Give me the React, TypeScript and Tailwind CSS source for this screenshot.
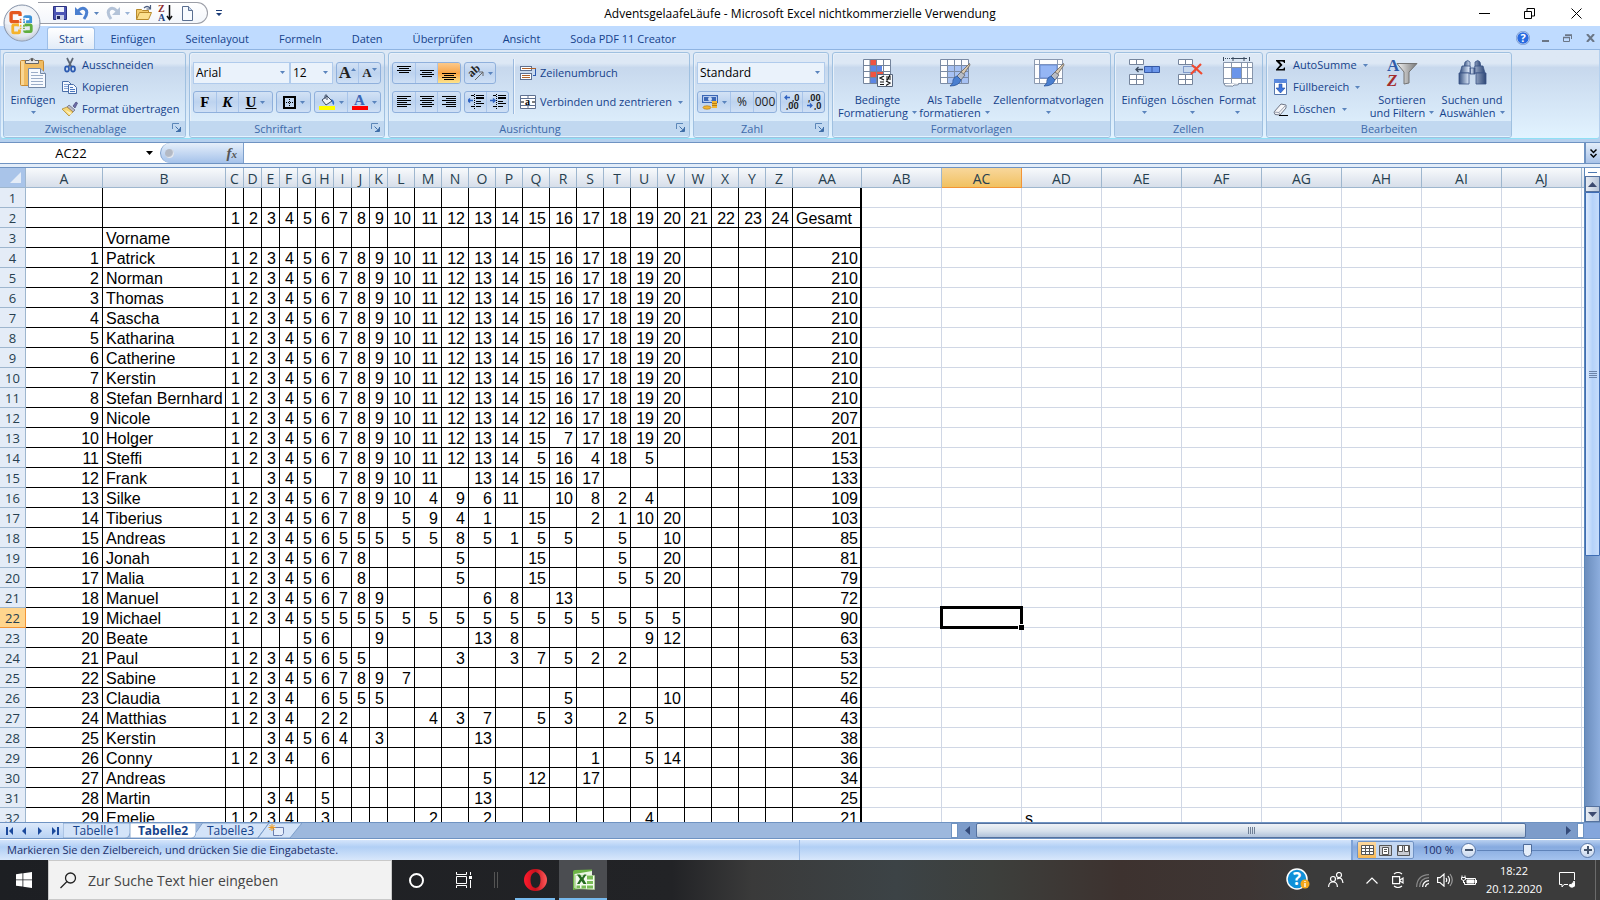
import { Fragment, type ReactNode } from "react";

type SheetRow = { name?: string; days?: string; total?: string };

const FULL = "1 2 3 4 5 6 7 8 9 10 11 12 13 14 15 16 17 18 19 20";

// one entry per spreadsheet row, "." is an empty cell
const ROWS: SheetRow[] = [
  {},
  { days: FULL + " 21 22 23 24", total: "Gesamt" },
  { name: "Vorname" },
  { name: "Patrick", days: FULL, total: "210" },
  { name: "Norman", days: FULL, total: "210" },
  { name: "Thomas", days: FULL, total: "210" },
  { name: "Sascha", days: FULL, total: "210" },
  { name: "Katharina", days: FULL, total: "210" },
  { name: "Catherine", days: FULL, total: "210" },
  { name: "Kerstin", days: FULL, total: "210" },
  { name: "Stefan Bernhard", days: FULL, total: "210" },
  { name: "Nicole", days: "1 2 3 4 5 6 7 8 9 10 11 12 13 14 12 16 17 18 19 20", total: "207" },
  { name: "Holger", days: "1 2 3 4 5 6 7 8 9 10 11 12 13 14 15 7 17 18 19 20", total: "201" },
  { name: "Steffi", days: "1 2 3 4 5 6 7 8 9 10 11 12 13 14 5 16 4 18 5", total: "153" },
  { name: "Frank", days: "1 . 3 4 5 . 7 8 9 10 11 . 13 14 15 16 17", total: "133" },
  { name: "Silke", days: "1 2 3 4 5 6 7 8 9 10 4 9 6 11 . 10 8 2 4", total: "109" },
  { name: "Tiberius", days: "1 2 3 4 5 6 7 8 . 5 9 4 1 . 15 . 2 1 10 20", total: "103" },
  { name: "Andreas", days: "1 2 3 4 5 6 5 5 5 5 5 8 5 1 5 5 . 5 . 10", total: "85" },
  { name: "Jonah", days: "1 2 3 4 5 6 7 8 . . . 5 . . 15 . . 5 . 20", total: "81" },
  { name: "Malia", days: "1 2 3 4 5 6 . 8 . . . 5 . . 15 . . 5 5 20", total: "79" },
  { name: "Manuel", days: "1 2 3 4 5 6 7 8 9 . . . 6 8 . 13", total: "72" },
  { name: "Michael", days: "1 2 3 4 5 5 5 5 5 5 5 5 5 5 5 5 5 5 5 5", total: "90" },
  { name: "Beate", days: "1 . . . 5 6 . . 9 . . . 13 8 . . . . 9 12", total: "63" },
  { name: "Paul", days: "1 2 3 4 5 6 5 5 . . . 3 . 3 7 5 2 2", total: "53" },
  { name: "Sabine", days: "1 2 3 4 5 6 7 8 9 7", total: "52" },
  { name: "Claudia", days: "1 2 3 4 . 6 5 5 5 . . . . . . 5 . . . 10", total: "46" },
  { name: "Matthias", days: "1 2 3 4 . 2 2 . . . 4 3 7 . 5 3 . 2 5", total: "43" },
  { name: "Kerstin", days: ". . 3 4 5 6 4 . 3 . . . 13", total: "38" },
  { name: "Conny", days: "1 2 3 4 . 6 . . . . . . . . . . 1 . 5 14", total: "36" },
  { name: "Andreas", days: ". . . . . . . . . . . . 5 . 12 . 17", total: "34" },
  { name: "Martin", days: ". . 3 4 . 5 . . . . . . 13", total: "25" },
  { name: "Emelie", days: "1 2 3 4 . 3 . . . . 2 . 2 . . . . . 4", total: "21" },
];

const DAY_COLS = "CDEFGHIJKLMNOPQRSTUVWXYZ".split("");
const FREE_COLS = ["AB", "AC", "AD", "AE", "AF", "AG", "AH", "AI", "AJ"];
const HEADERS = ["A", "B", ...DAY_COLS, "AA", ...FREE_COLS];

const UI = "font-['Open_Sans','Noto_Sans',sans-serif]";

/* ---------- small building blocks ---------- */

function Caret({ className = "" }: { className?: string }) {
  return (
    <svg className={`h-[3px] w-[5px] shrink-0 ${className}`} viewBox="0 0 5 3" fill="#5a84bd">
      <path d="M0 0h5L2.500 3z" />
    </svg>
  );
}

function Group({ label, className, launcher, children }: { label: string; className: string; launcher?: boolean; children: ReactNode }) {
  return (
    <section className={`flex shrink-0 flex-col overflow-hidden rounded-[3px] border border-[#9fc0e0] shadow-[inset_1px_1px_0_#e8f0f9] ${className}`}>
      <div className="flex h-[68px]">{children}</div>
      <div className={`relative flex h-[15px] items-center justify-center bg-[#c1d8f0] text-[#3e6aaa] ${launcher ? "pr-[18px]" : ""}`}>
        {label}
        {launcher && (
          <button aria-label={`${label} Optionen`} className="absolute right-1 top-[2px]">
            <svg className="h-[9px] w-[9px]" viewBox="0 0 9 9" fill="none" stroke="#5b86b8">
              <path d="M.5 6V.5H7" />
              <path d="M3.500 3.500l3 3M8.500 4v4.500H4" stroke="#3f6ea8" />
              <path d="M5 8h3V5z" fill="#3f6ea8" stroke="none" />
            </svg>
          </button>
        )}
      </div>
    </section>
  );
}

function BigButton({ icon, lines, className }: { icon: ReactNode; lines: string[]; className: string }) {
  return (
    <button className={`flex flex-col items-center whitespace-nowrap pt-1 leading-[13px] ${className}`}>
      <span className="mb-1 h-8 w-8">{icon}</span>
      <span>{lines[0]}</span>
      <span className="flex h-[13px] items-center gap-1">
        {lines[1]}
        <Caret />
      </span>
    </button>
  );
}

function SmallButton({ icon, children, caret }: { icon: ReactNode; children: ReactNode; caret?: boolean }) {
  return (
    <button className="flex h-[22px] shrink-0 items-center gap-1 whitespace-nowrap">
      <span className="h-4 w-4 shrink-0">{icon}</span>
      {children}
      {caret && <Caret className="ml-[2px]" />}
    </button>
  );
}

function Cluster({ children, className = "" }: { children: ReactNode; className?: string }) {
  return (
    <div className={`flex h-[22px] divide-x divide-[#a9c5ea] overflow-hidden rounded-[3px] border border-[#8fb0dc] bg-linear-to-b from-[#d3e2f5] via-[#bdd3ef] to-[#cfe0f5] ${className}`}>
      {children}
    </div>
  );
}

function Tool({ label, className = "", children, caret }: { label: string; className?: string; children: ReactNode; caret?: boolean }) {
  return (
    <button aria-label={label} className={`flex flex-1 items-center justify-center gap-1 ${className}`}>
      {children}
      {caret && <Caret />}
    </button>
  );
}

function Picker({ label, value, className }: { label: string; value: string; className: string }) {
  return (
    <div className={`relative h-[22px] border border-[#b0cbec] bg-[#eaf2fb] text-[12px] ${className}`}>
      <select aria-label={label} className="h-full w-full appearance-none pl-[2px] text-black outline-none">
        <option>{value}</option>
      </select>
      <Caret className="pointer-events-none absolute right-1 top-2" />
    </div>
  );
}

/* ---------- ribbon icons ---------- */

function Lines({ d }: { d: string }) {
  return (
    <svg className="h-4 w-4" viewBox="0 0 16 16" stroke="#000" fill="none" shapeRendering="crispEdges">
      <path d={d} />
    </svg>
  );
}

function PasteIcon() {
  return (
    <svg viewBox="0 0 32 32">
      <rect x="3.500" y="3.500" width="23" height="25" rx="1" fill="#f0bc62" stroke="#c98b32" />
      <path d="M4 4h3v24H4z" fill="#f9d795" />
      <path d="M8.500 6.500v-3h3.500Q15-1 18 3.500h3.500v3z" fill="#e8e8e8" stroke="#666" />
      <circle cx="15" cy="3" r="1.200" fill="#555" />
      <path d="M11.500 11.500h12l5 5v14h-17z" fill="#f7fafe" stroke="#7388a6" />
      <path d="M23.500 11.500v5h5" fill="#cfdbec" stroke="#7388a6" />
      <path d="M14 15.500h7M14 18.500h12M14 21.500h12M14 24.500h12M14 27.500h12" stroke="#9badc8" />
    </svg>
  );
}

function ScissorsIcon() {
  return (
    <svg viewBox="0 0 16 16" fill="none">
      <path d="M5 1l4.500 9M11 1L6.500 10" stroke="#5c6675" strokeWidth="1.700" />
      <ellipse cx="5" cy="12" rx="2" ry="2.600" stroke="#2c5ab0" strokeWidth="1.700" />
      <ellipse cx="11" cy="12" rx="2" ry="2.600" stroke="#2c5ab0" strokeWidth="1.700" />
    </svg>
  );
}

function CopyIcon() {
  return (
    <svg viewBox="0 0 16 16" fill="#f4f8fe" stroke="#4a6ea8">
      <path d="M.5 2.500h6l3 3v7h-9z" />
      <path d="M2 5.500h4M2 7.500h4M2 9.500h4" stroke="#88a6d6" />
      <path d="M6.500 5.500h5l3 3v6h-8z" />
      <path d="M8 8.500h3M8 10.500h5M8 12.500h5" stroke="#4a78c0" />
    </svg>
  );
}

function FormatPainterIcon() {
  return (
    <svg viewBox="0 0 16 16">
      <path d="M11 5l3-4 1.500 1-2.500 5z" fill="#6d6ea8" stroke="#45457a" strokeWidth=".7" />
      <path d="M7 4l6 5-2 2-6-5z" fill="#b9b9c6" stroke="#66667a" strokeWidth=".7" />
      <path d="M5 6L0 8l7 7 4-4z" fill="#f6d775" stroke="#a7812c" strokeWidth=".7" />
      <path d="M3 9l5 5 2-2z" fill="#fbf0c0" />
    </svg>
  );
}

function ConditionalIcon() {
  return (
    <svg viewBox="0 0 32 32">
      <path d="M1.500 2.500h27v24h-27z" fill="#fff" />
      <path d="M8 2h6v6H8zM8 14h13v6H8z" fill="#ee5340" />
      <path d="M8 8h12v6H8zM8 20h6v6H8z" fill="#5b86e5" />
      <path d="M1.500 2.500h27v24h-27zM1.500 8.500h27M1.500 14.500h27M1.500 20.500h27M8 2v24M14.500 2v24M21.500 2v24" fill="none" stroke="#74849c" />
      <path d="M15.500 17.500h15v12h-15z" fill="#f8fafc" stroke="#56657c" />
      <path d="M22 19l-4 2 4 2M18 25h4M18 27.500h4M24 20h5M24 22h5M28 18l-3 5.500M24 24l4 2-4 2.500" fill="none" stroke="#111" strokeWidth="1.200" />
    </svg>
  );
}

function Brush() {
  return (
    <g>
      <path d="M31 8l-9 13-3-3L29 8q2-3 2 0z" fill="#d9c9b0" stroke="#6b6258" strokeWidth=".8" />
      <path d="M22 15l4 3-4 5-4-4z" fill="#b8bcc4" stroke="#5d626b" strokeWidth=".8" />
      <path d="M18 19l4 4q-2 6-11 6 4-3 3-6 1-3 4-4z" fill="#4a7fd0" stroke="#2a549c" strokeWidth=".8" />
    </g>
  );
}

function TableStyleIcon() {
  return (
    <svg viewBox="0 0 32 32">
      <path d="M1.500 2.500h28v24h-28z" fill="#fdfdfe" />
      <path d="M8 9h21v17H8z" fill="#a7c1f3" />
      <path d="M1.500 2.500h28v24h-28zM1.500 8.500h28M1.500 14.500h28M1.500 20.500h28M8.500 2v24M15.500 2v24M22.500 2v24" fill="none" stroke="#7b8ba5" />
      <Brush />
    </svg>
  );
}

function CellStyleIcon() {
  return (
    <svg viewBox="0 0 32 32">
      <path d="M1.500 2.500h28v24h-28z" fill="#fdfdfe" />
      <path d="M1.500 2.500h28v24h-28zM1.500 7.500h28M1.500 21.500h28M6.500 2v24M24.500 2v24" fill="none" stroke="#8b99b0" />
      <path d="M7 8h17v13H7z" fill="#95b6f5" stroke="#6a8bd0" />
      <Brush />
    </svg>
  );
}

function SplitGrid() {
  return <path d="M1.500 2.500h14v5h-14zM8.500 2.500v5M1.500 17.500h14v10h-14zM8.500 17.500v10M1.500 22.500h14" fill="#fff" stroke="#76859c" />;
}

function InsertCellsIcon() {
  return (
    <svg viewBox="0 0 32 32">
      <SplitGrid />
      <path d="M16.500 9.500h15v6h-15zM24 9.500v6" fill="#6a95ea" stroke="#3559a5" />
      <path d="M15 12.500H8M10.500 10L8 12.500l2.500 2.500" fill="none" stroke="#3b4a5e" strokeWidth="1.300" />
    </svg>
  );
}

function DeleteCellsIcon() {
  return (
    <svg viewBox="0 0 32 32">
      <SplitGrid />
      <path d="M6.500 9.500h12v6h-12z" fill="none" stroke="#3559a5" strokeDasharray="1 1" />
      <path d="M15 8l10 9M24 7l-10 10" stroke="#ef4a30" strokeWidth="2.200" />
    </svg>
  );
}

function FormatCellsIcon() {
  return (
    <svg viewBox="0 0 32 32">
      <path d="M1.500 0v4M27.500 0v4M10 1.500h15M22 0v4M11 0v4" stroke="#3b4a5e" fill="none" />
      <path d="M3 1.500h8" stroke="#3b4a5e" strokeDasharray="1 1" />
      <path d="M1.500 5.500h29v21h-29z" fill="#fff" />
      <path d="M10 11h9v10h-9z" fill="#6a95ea" />
      <path d="M1.500 5.500h29v21h-29zM1.500 10.500h29M1.500 21.500h29M9.500 5v22M19.500 5v22M25.500 5v22" fill="none" stroke="#8795ab" />
      <path d="M2 27q1 3 4 2h3q2 1 3-1h3q2 0 2-2" fill="#fff" stroke="#76859c" />
    </svg>
  );
}

function SortFilterIcon() {
  return (
    <svg viewBox="0 0 32 32">
      <defs>
        <linearGradient id="funnel">
          <stop offset="0" stopColor="#f2f2f2" />
          <stop offset="1" stopColor="#777" />
        </linearGradient>
      </defs>
      <path d="M11 6.500h20L23 15v11l-5 1V15z" fill="url(#funnel)" stroke="#747474" />
      <text x="1" y="14" fontSize="17" fontWeight="700" fontFamily="Liberation Serif" fill="#2f5ba8">A</text>
      <text x="1" y="29" fontSize="17" fontWeight="700" fontStyle="italic" fontFamily="Liberation Serif" fill="#a32d2d">Z</text>
    </svg>
  );
}

function BinocularsIcon() {
  return (
    <svg viewBox="0 0 32 32">
      <defs>
        <linearGradient id="bino">
          <stop offset="0" stopColor="#35507f" />
          <stop offset=".35" stopColor="#d5e2f5" />
          <stop offset="1" stopColor="#2d4675" />
        </linearGradient>
      </defs>
      <g fill="url(#bino)" stroke="#3a5485" strokeWidth=".8">
        <path d="M9 5q3-3 5 0v5H8zM19 5q3-3 5 0l1 5h-6z" />
        <path d="M6 9h8l1 7H4zM19 9h8l2 7H18z" />
        <path d="M3 16h10v11H3zM20 16h10v11H20z" />
        <path d="M14 11h5v6h-5z" />
      </g>
    </svg>
  );
}

function BorderIcon() {
  return (
    <svg className="h-[13px] w-[13px]" viewBox="0 0 13 13" shapeRendering="crispEdges">
      <path d="M1 1h11v11H1z" fill="none" stroke="#000" strokeWidth="2" />
      <path d="M6.500 3v8M3 6.500h8" stroke="#000" strokeDasharray="1 1" />
    </svg>
  );
}

function FillIcon() {
  return (
    <svg className="h-4 w-4" viewBox="0 0 16 16">
      <path d="M3 6l5-4 5 5-6 4z" fill="#eef3fa" stroke="#3d4b63" />
      <path d="M6 5V1.500q1-1.500 2 0V6" fill="none" stroke="#3d4b63" />
      <path d="M12 5q4 1 3 6-2-1-2-4z" fill="#2f6fd0" />
      <path d="M0 12h16v4H0z" fill="#ffff00" />
    </svg>
  );
}

function FontColorIcon() {
  return (
    <svg className="h-4 w-4" viewBox="0 0 16 16">
      <text x="2" y="11" fontSize="15" fontWeight="700" fontFamily="Liberation Serif" fill="#3a66b5">A</text>
      <path d="M0 12h16v4H0z" fill="#ff0000" />
    </svg>
  );
}

function WrapIcon() {
  return (
    <svg viewBox="0 0 16 16" fill="none" shapeRendering="crispEdges">
      <path d="M.5 1.500h11v4H.5zM.5 8.500h11v6H.5z" fill="#fff" stroke="#5e7090" />
      <path d="M2 3.500h14M2 10.500h8M2 12.500h8" stroke="#b0622a" />
      <path d="M15.500 4v6h-3" stroke="#2c5ab0" />
    </svg>
  );
}

function MergeIcon() {
  return (
    <svg viewBox="0 0 16 16">
      <path d="M.5 1.500h15v13H.5zM.5 4.500h15M.5 11.500h15M8 1v3M8 12v3" fill="#fff" stroke="#5e7090" />
      <text x="5" y="11" fontSize="10" fontWeight="700" fontFamily="Liberation Serif">a</text>
      <path d="M1 8h3M12 8h3" stroke="#000" />
    </svg>
  );
}

function CurrencyIcon() {
  return (
    <svg className="h-4 w-4" viewBox="0 0 16 16">
      <path d="M0 1h16v8H0z" fill="#3b67b5" />
      <path d="M1.500 2.500h13v5h-13z" fill="none" stroke="#b8cdf0" />
      <circle cx="8" cy="5" r="2" fill="#cbdcf5" />
      <path d="M10 7h5v7h-5z" fill="#f2b632" />
      <path d="M10 9.500h5M10 11.500h5" stroke="#b87d14" />
      <ellipse cx="5" cy="13.500" rx="4" ry="1.700" fill="#f2b632" stroke="#b87d14" strokeWidth=".7" />
    </svg>
  );
}

function DecimalIcon({ more }: { more?: boolean }) {
  return (
    <svg className="h-4 w-4" viewBox="0 0 16 16">
      <text x={more ? 8 : 2} y="7" fontSize="9" fontWeight="700" fontFamily="Roboto" fill="#222">{more ? ",0" : ",00"}</text>
      <text x={more ? 2 : 8} y="15" fontSize="9" fontWeight="700" fontFamily="Roboto" fill="#222">{more ? ",00" : ",0"}</text>
      <path d={more ? "M6 3.500H1M3 1.500L1 3.500l2 2" : "M1 11.500h5M4 9.500l2 2-2 2"} fill="none" stroke="#2f62c0" strokeWidth="1.300" />
    </svg>
  );
}

function IndentIcon({ more }: { more?: boolean }) {
  return (
    <svg className="h-4 w-4" viewBox="0 0 16 16" fill="none" stroke="#000" shapeRendering="crispEdges">
      <path d="M3 1.500h3M8 1.500h8M8 3.500h8M8 4.500h8M8 7.500h5M8 9.500h8M3 12.500h3M8 12.500h5" />
      <path d="M6.500 0v16" strokeDasharray="1 1" />
      <path d={more ? "M0 6.500h5M3 4.500l2 2-2 2" : "M5 6.500H0M2 4.500l-2 2 2 2"} stroke="#2f62c0" strokeWidth="1.500" shapeRendering="auto" />
    </svg>
  );
}

/* ---------- window parts ---------- */

function OfficeButton() {
  return (
    <button aria-label="Office" className="absolute left-[3px] top-1 z-10 h-[38px] w-[38px]">
      <svg viewBox="0 0 38 38" fill="none">
        <defs>
          <radialGradient id="orb" cx=".5" cy=".4" r=".62">
            <stop offset="0" stopColor="#fff" />
            <stop offset=".75" stopColor="#eef1f6" />
            <stop offset="1" stopColor="#b4becd" />
          </radialGradient>
        </defs>
        <circle cx="19" cy="19" r="18" fill="url(#orb)" stroke="#8592a8" />
        <path d="M2 20a17 17 0 0034 0q-17 4-34 0z" fill="#cdd6e4" opacity=".35" />
        <g transform="translate(-2 -2) scale(1.120)">
          <g strokeWidth="3">
            <path d="M16 17.500h-6q-1 0-1-1v-6q0-1 1-1h6q1 0 1 1v2" stroke="#e4581e" />
            <path d="M21 14q0-1 1-1h3.500q1 0 1 1v3.500h-4" stroke="#3e93d8" strokeWidth="2.500" />
            <path d="M16 20.500h-4.500q-1 0-1 1v5q0 1 1 1h4q1 0 1-1v-2" stroke="#f5b32b" strokeWidth="2.500" />
            <path d="M21 20.500h5q1 0 1 1v4q0 1-1 1h-4q-1 0-1-1" stroke="#5fae3d" strokeWidth="2.500" />
          </g>
          <g strokeWidth="1.500" strokeDasharray="1.500 1">
            <path d="M17.500 15v3h-3" stroke="#e4581e" />
            <path d="M20.500 15v3h3" stroke="#3e93d8" />
            <path d="M14.500 21h3v3" stroke="#f5b32b" />
            <path d="M23.500 21h-3v3" stroke="#5fae3d" />
          </g>
        </g>
      </svg>
    </button>
  );
}

function QuickAccess() {
  return (
    <div className="ml-[38px] flex h-[22px] w-[170px] items-center rounded-r-full border border-l-0 border-[#9a9da6] bg-linear-to-b from-white to-[#f3f6fb] pl-[14px]">
      <button aria-label="Speichern" className="mr-[6px] h-4 w-4 shrink-0">
        <svg viewBox="0 0 16 16">
          <path d="M1.500 1.500h13v13h-13z" fill="#4c55b5" stroke="#2b3180" />
          <path d="M4 2h8v5H4z" fill="#eef2fb" />
          <path d="M4 10h8v5H4z" fill="#c9cfe6" />
          <path d="M5 11h3v3H5z" fill="#1f2459" />
        </svg>
      </button>
      <button aria-label="Rückgängig" className="mr-1 h-4 w-4 shrink-0">
        <svg viewBox="0 0 16 16" fill="none">
          <path d="M4 6q4-4 7-2 4 3-1 10" stroke="#4a7fd0" strokeWidth="3" />
          <path d="M1 2v8h8z" fill="#4a7fd0" />
        </svg>
      </button>
      <Caret className="mr-[6px]" />
      <button aria-label="Wiederholen" className="mr-1 h-4 w-4 shrink-0">
        <svg viewBox="0 0 16 16" fill="none">
          <path d="M12 6Q8 2 5 4q-4 3 1 10" stroke="#b4c3d8" strokeWidth="3" />
          <path d="M15 2v8H7z" fill="#b4c3d8" />
        </svg>
      </button>
      <Caret className="mr-[6px] opacity-60" />
      <button aria-label="Öffnen" className="mr-[6px] h-4 w-4 shrink-0">
        <svg viewBox="0 0 16 16">
          <path d="M.5 14.500v-10h5l1 1h6v3" fill="#f4cd6e" stroke="#b78a2c" />
          <path d="M.5 14.500l3-7h12l-3 7z" fill="#fbe08e" stroke="#b78a2c" />
          <path d="M8 3q3-3 6 0M14.500 0v4h-4" fill="none" stroke="#4b5d80" strokeWidth="1.200" />
        </svg>
      </button>
      <button aria-label="Absteigend sortieren" className="mr-[6px] h-4 w-4 shrink-0">
        <svg viewBox="0 0 16 16">
          <text x="0" y="7" fontSize="10" fontWeight="700" fontFamily="Liberation Serif" fill="#8c2a2a">Z</text>
          <text x="0" y="16" fontSize="10" fontWeight="700" fontFamily="Liberation Serif" fill="#22407c">A</text>
          <path d="M11.500 0v14M9 11l2.500 3.500L14 11" fill="none" stroke="#111" strokeWidth="1.500" />
        </svg>
      </button>
      <button aria-label="Neu" className="h-4 w-4 shrink-0">
        <svg viewBox="0 0 16 16">
          <path d="M2.500 1.500h6l4 4v10h-10z" fill="#f8fbff" stroke="#5a6f91" />
          <path d="M8.500 1.500v4h4" fill="#c4d3ea" stroke="#5a6f91" />
        </svg>
      </button>
    </div>
  );
}

function TitleBar() {
  return (
    <header className="relative flex h-[26px] shrink-0 items-center bg-white">
      <OfficeButton />
      <QuickAccess />
      <button aria-label="Symbolleiste anpassen" className="ml-2">
        <svg className="h-[7px] w-[6px]" viewBox="0 0 6 7" fill="#1d3d78">
          <path d="M0 0h6v1H0zM0 3h6L3 6z" />
        </svg>
      </button>
      <h1 className="pointer-events-none absolute inset-x-0 top-1 text-center text-[12px] leading-5 text-black">
        AdventsgelaafeLäufe - Microsoft Excel nichtkommerzielle Verwendung
      </h1>
      <div className="ml-auto flex">
        <button aria-label="Minimieren" className="flex h-6 w-[46px] items-center justify-center">
          <svg className="h-[11px] w-[11px]" viewBox="0 0 11 11" stroke="#000"><path d="M0 5.500h11" /></svg>
        </button>
        <button aria-label="Verkleinern" className="flex h-6 w-[45px] items-center justify-center">
          <svg className="h-[11px] w-[11px]" viewBox="0 0 11 11" stroke="#000" fill="none"><path d="M.5 3.500h7v7h-7zM3 3V.5h7.500V8H8" /></svg>
        </button>
        <button aria-label="Schließen" className="flex h-6 w-12 items-center justify-center">
          <svg className="h-[11px] w-[11px]" viewBox="0 0 11 11" stroke="#000"><path d="M.5 .5l10 10M10.500 .5l-10 10" /></svg>
        </button>
      </div>
    </header>
  );
}

function RibbonTabs() {
  const tabs = ["Einfügen", "Seitenlayout", "Formeln", "Daten", "Überprüfen", "Ansicht", "Soda PDF 11 Creator"];
  return (
    <nav className="flex h-[23px] shrink-0 items-end bg-[#bfdbff] pl-[47px] pr-[5px]">
      <button className="-mb-px h-[23px] rounded-t-[3px] border border-b-0 border-[#9dbfe8] bg-linear-to-b from-white to-[#e1ebf7] px-[11px] text-[#15428b]">Start</button>
      {tabs.map((t) => (
        <button key={t} className="h-[22px] px-[15px] pt-px text-[#15428b]">{t}</button>
      ))}
      <div className="ml-auto flex h-[23px] items-center gap-3">
        <button aria-label="Hilfe">
          <svg className="h-[14px] w-[14px]" viewBox="0 0 14 14">
            <circle cx="7" cy="7" r="6.300" fill="#2a6be0" stroke="#fff" />
            <circle cx="7" cy="7" r="6.700" fill="none" stroke="#4672b8" strokeWidth=".6" />
            <text x="7" y="11" textAnchor="middle" fontSize="11" fontWeight="700" fontFamily="Open Sans" fill="#fff">?</text>
          </svg>
        </button>
        <button aria-label="Fenster minimieren"><svg className="h-2 w-[7px]" viewBox="0 0 7 8"><path d="M0 6h7v2H0z" fill="#6b7686" /></svg></button>
        <button aria-label="Fenster wiederherstellen" className="ml-[2px]">
          <svg className="h-2 w-[9px]" viewBox="0 0 9 8" fill="none" stroke="#6b7686"><path d="M.5 3.500h6v4h-6zM2 1.500h6.500V5" /><path d="M2 1h7M0 3.500h7" strokeWidth="1.500" /></svg>
        </button>
        <button aria-label="Fenster schließen" className="ml-[2px]">
          <svg className="h-2 w-[9px]" viewBox="0 0 9 8" stroke="#6b7686" strokeWidth="2"><path d="M1 0l7 8M8 0L1 8" /></svg>
        </button>
      </div>
    </nav>
  );
}

function Ribbon() {
  return (
    <div className="shrink-0 border-t border-[#8fb4e2] bg-[#b5d0ee] pb-[3px]">
      <div className="mx-px flex h-[89px] gap-[3px] overflow-hidden rounded-b-[3px] border-b border-[#8fe0f5] bg-linear-to-b from-[#dde8f5] from-15% via-[#c7d8ed] via-20% to-[#e2f3ff] pl-[2px] pt-[2px] text-[#15428b]">
        <Group label="Zwischenablage" className="w-[183px]" launcher>
          <BigButton icon={<PasteIcon />} lines={["Einfügen"]} className="ml-1 w-[50px]" />
          <div className="ml-1 flex flex-col pt-px">
            <SmallButton icon={<ScissorsIcon />}>Ausschneiden</SmallButton>
            <SmallButton icon={<CopyIcon />}>Kopieren</SmallButton>
            <SmallButton icon={<FormatPainterIcon />}>Format übertragen</SmallButton>
          </div>
        </Group>
        <Group label="Schriftart" className="w-[196px]" launcher>
          <div className="flex w-full flex-col gap-[7px] px-[3px] pt-[9px]">
            <div className="flex">
              <Picker label="Schriftart" value="Arial" className="w-[97px]" />
              <Picker label="Schriftgrad" value="12" className="w-[43px]" />
              <Cluster className="ml-[3px] w-[45px] font-['Liberation_Serif'] font-bold text-[#222]">
                <Tool label="Größer" className="text-[17px]">A<Caret className="-ml-1 mb-2 rotate-180" /></Tool>
                <Tool label="Kleiner" className="text-[13px]">A<Caret className="-ml-1 mb-2" /></Tool>
              </Cluster>
            </div>
            <div className="flex gap-[3px]">
              <Cluster className="w-[80px] font-['Liberation_Serif'] text-[15px] font-bold text-black">
                <Tool label="Fett">F</Tool>
                <Tool label="Kursiv" className="italic">K</Tool>
                <Tool label="Unterstrichen" caret className="min-w-[33px]"><span className="underline">U</span></Tool>
              </Cluster>
              <Cluster className="w-[35px]"><Tool label="Rahmen" caret><BorderIcon /></Tool></Cluster>
              <Cluster className="w-[67px]">
                <Tool label="Füllfarbe" caret><FillIcon /></Tool>
                <Tool label="Schriftfarbe" caret><FontColorIcon /></Tool>
              </Cluster>
            </div>
          </div>
        </Group>
        <Group label="Ausrichtung" className="w-[302px]" launcher>
          <div className="flex w-[120px] flex-col gap-[7px] pl-[3px] pt-[9px]">
            <div className="flex gap-[3px]">
              <Cluster className="w-[69px]">
                <Tool label="Oben"><Lines d="M1 1.500h14M3 3.500h10M1 5.500h14M3 7.500h10" /></Tool>
                <Tool label="Mitte"><Lines d="M1 5.500h14M3 7.500h10M1 9.500h14M3 11.500h10" /></Tool>
                <Tool label="Unten" className="bg-linear-to-b from-[#fbc98a] via-[#f9a545] to-[#fde58c]"><Lines d="M1 8.500h14M3 10.500h10M1 12.500h14M3 14.500h10" /></Tool>
              </Cluster>
              <Cluster className="w-8">
                <Tool label="Orientierung" caret>
                  <svg className="h-4 w-4" viewBox="0 0 16 16">
                    <text x="1" y="10" fontSize="12" fontWeight="700" fontFamily="Liberation Serif" transform="rotate(-42 6 8)" fill="#222">ab</text>
                    <path d="M7 15l8-8M15 11V7h-4" fill="none" stroke="#666" />
                  </svg>
                </Tool>
              </Cluster>
            </div>
            <div className="flex gap-[3px]">
              <Cluster className="w-[69px]">
                <Tool label="Linksbündig"><Lines d="M1 2.500h14M1 4.500h10M1 6.500h14M1 8.500h10M1 10.500h14M1 12.500h10" /></Tool>
                <Tool label="Zentriert"><Lines d="M1 2.500h14M3 4.500h10M1 6.500h14M3 8.500h10M1 10.500h14M3 12.500h10" /></Tool>
                <Tool label="Rechtsbündig"><Lines d="M1 2.500h14M5 4.500h10M1 6.500h14M5 8.500h10M1 10.500h14M5 12.500h10" /></Tool>
              </Cluster>
              <Cluster className="w-[45px]">
                <Tool label="Einzug verkleinern"><IndentIcon /></Tool>
                <Tool label="Einzug vergrößern"><IndentIcon more /></Tool>
              </Cluster>
            </div>
          </div>
          <div className="ml-1 mt-[6px] h-[55px] w-px bg-[#9ab9de] shadow-[1px_0_0_#eef4fb]" />
          <div className="ml-[6px] flex flex-col gap-[7px] pt-[9px]">
            <SmallButton icon={<WrapIcon />}>Zeilenumbruch</SmallButton>
            <SmallButton icon={<MergeIcon />} caret>Verbinden und zentrieren</SmallButton>
          </div>
        </Group>
        <Group label="Zahl" className="w-[136px]" launcher>
          <div className="flex flex-col gap-[7px] pl-[3px] pt-[9px]">
            <Picker label="Zahlenformat" value="Standard" className="w-[128px]" />
            <div className="flex gap-[3px]">
              <Cluster className="w-[80px] text-[12px] text-[#222]">
                <Tool label="Währung" caret className="min-w-[33px]"><CurrencyIcon /></Tool>
                <Tool label="Prozent">%</Tool>
                <Tool label="Tausender">000</Tool>
              </Cluster>
              <Cluster className="w-[45px]">
                <Tool label="Dezimalstelle hinzufügen"><DecimalIcon more /></Tool>
                <Tool label="Dezimalstelle löschen"><DecimalIcon /></Tool>
              </Cluster>
            </div>
          </div>
        </Group>
        <Group label="Formatvorlagen" className="w-[279px]">
          <BigButton icon={<ConditionalIcon />} lines={["Bedingte", "Formatierung"]} className="ml-1 w-[81px]" />
          <BigButton icon={<TableStyleIcon />} lines={["Als Tabelle", "formatieren"]} className="w-[73px]" />
          <BigButton icon={<CellStyleIcon />} lines={["Zellenformatvorlagen"]} className="w-[115px]" />
        </Group>
        <Group label="Zellen" className="w-[149px]">
          <BigButton icon={<InsertCellsIcon />} lines={["Einfügen"]} className="ml-1 w-[50px]" />
          <BigButton icon={<DeleteCellsIcon />} lines={["Löschen"]} className="w-[47px]" />
          <BigButton icon={<FormatCellsIcon />} lines={["Format"]} className="w-[43px]" />
        </Group>
        <Group label="Bearbeiten" className="w-[246px]">
          <div className="ml-[6px] flex w-[93px] flex-col pt-px">
            <SmallButton caret icon={<svg viewBox="0 0 16 16"><path d="M3 3h9v3h-1q0-1.500-2-1.500H6.500L9.500 8l-4 4h3.500q2 0 2-1.500h1v3H3v-1L7 8 3 4z" fill="#000" /></svg>}>AutoSumme</SmallButton>
            <SmallButton caret icon={<svg viewBox="0 0 16 16"><path d="M1.500 .5h12v15h-12z" fill="#fff" stroke="#5777ad" /><path d="M1 0h13v4H1z" fill="#5a88dc" /><path d="M6 5h3v4h3l-4.500 5L3 9h3z" fill="#3d74de" stroke="#234b9b" strokeWidth=".6" /></svg>}>Füllbereich</SmallButton>
            <SmallButton caret icon={<svg viewBox="0 0 16 16"><path d="M1 11l7-8 5 1v3l-6 7-5-.5z" fill="#f6f6f8" stroke="#6f7686" /><path d="M1 11l5 .5 7-7.500M6 11.500l1 2.500" fill="none" stroke="#9aa1b0" /><path d="M6 14.500h9" stroke="#000" /></svg>}>Löschen</SmallButton>
          </div>
          <BigButton icon={<SortFilterIcon />} lines={["Sortieren", "und Filtern"]} className="w-[72px]" />
          <BigButton icon={<BinocularsIcon />} lines={["Suchen und", "Auswählen"]} className="w-[68px]" />
        </Group>
      </div>
    </div>
  );
}

function FormulaBar() {
  return (
    <div className="flex h-[22px] shrink-0 border-y border-[#6f93c2] bg-white">
      <div className="flex w-[160px] items-center">
        <input aria-label="Namenfeld" defaultValue="AC22" className="w-[142px] text-center text-[13px] text-black outline-none" />
        <button aria-label="Namen anzeigen" className="ml-1">
          <svg className="h-1 w-[7px]" viewBox="0 0 7 4"><path d="M0 0h7L3.500 4z" /></svg>
        </button>
      </div>
      <div className="flex w-[84px] items-center justify-between rounded-l-full border-l border-r border-[#7d9fcb] bg-linear-to-b from-[#e6effa] to-[#a5c2ea] pl-1 pr-[6px]">
        <span className="h-[9px] w-[9px] rounded-full bg-[#b3b9c4] shadow-[inset_-1px_-1px_1px_#e8edf5]" />
        <button aria-label="Funktion einfügen" className="font-['Liberation_Serif'] text-[15px] font-bold italic leading-4 text-[#555]">
          f<span className="text-[11px]">x</span>
        </button>
      </div>
      <input aria-label="Bearbeitungsleiste" className="min-w-0 flex-1 px-1 outline-none" />
      <button aria-label="Bearbeitungsleiste erweitern" className="flex w-4 items-center justify-center border-l-2 border-[#6f93c2] bg-linear-to-b from-[#e3edf9] to-[#a9c3e8]">
        <svg className="h-[9px] w-[7px]" viewBox="0 0 7 9" fill="none" stroke="#000" strokeWidth="1.500"><path d="M.5 .5l3 3 3-3M.5 5l3 3 3-3" /></svg>
      </button>
    </div>
  );
}

function Sheet() {
  const head = "border-b border-r border-[#9eb6ce] px-0 pb-0 pt-[2px] text-center text-[14px] font-normal leading-[17px] text-[#273f4f]";
  const cell = "h-5 overflow-hidden whitespace-nowrap border-b border-r border-black px-0 pb-0 pt-[2px] leading-[17px]";
  const plain = "h-5 border-b border-r border-[#d0d7e5] px-0 pb-0 pt-[2px] leading-[17px]";
  return (
    <div className="min-h-0 min-w-0 flex-1 overflow-hidden bg-white">
      <table className="w-full table-fixed border-separate border-spacing-0 text-[16px] text-black">
        <colgroup>
          <col className="w-[26px]" />
          <col className="w-[77px]" />
          <col className="w-[123px]" />
          {DAY_COLS.map((c, i) => <col key={c} className={i < 9 ? "w-[18px]" : "w-[27px]"} />)}
          <col className="w-[69px]" />
          {FREE_COLS.map((c) => <col key={c} className="w-20" />)}
          <col />
        </colgroup>
        <thead className={UI}>
          <tr className="h-5 bg-linear-to-b from-[#f8fafc] to-[#d5dde9]">
            <th className="border-b border-r border-[#9eb6ce] bg-[#a9c4e9] p-0">
              <svg className="ml-auto mr-1 h-[11px] w-[11px]" viewBox="0 0 11 11"><path d="M11 0v11H0z" fill="#e4ecf7" /></svg>
            </th>
            {HEADERS.map((h) => (
              <th key={h} scope="col" className={h === "AC" ? `${head} border-[#f29436]! bg-linear-to-b from-[#f8d79b] to-[#f1c15f]` : head}>{h}</th>
            ))}
            <th className="border-b border-[#9eb6ce] p-0" />
          </tr>
        </thead>
        <tbody className="font-['Liberation_Sans',Arial,sans-serif]">
          {ROWS.map((row, r) => {
            const n = r + 1;
            const days = (row.days ?? "").split(" ");
            return (
              <tr key={n} className="h-5">
                <th scope="row" className={`${UI} border-b border-r p-0 align-bottom text-[13px] font-normal leading-[17px] text-[#273f4f] ${n === 22 ? "border-[#f29436] bg-[#ffd58d]" : "border-[#9eb6ce] bg-[#e4ecf7]"}`}>{n}</th>
                <td className={`${cell} pr-[3px] text-right`}>{n > 3 ? n - 3 : ""}</td>
                <td className={`${cell} pl-[3px]`}>{row.name}</td>
                {DAY_COLS.map((c, i) => (
                  <td key={c} className={`${cell} pr-[3px] text-right`}>
                    {days[i] === "." ? "" : days[i]}
                  </td>
                ))}
                <td className={`${cell} border-r-2 ${n === 2 ? "pl-[3px]" : "pr-[2px] text-right"}`}>{row.total}</td>
                {FREE_COLS.map((c) => (
                  <td key={c} className={`${plain} ${c === "AC" && n === 22 ? "relative" : ""}`}>
                    {c === "AC" && n === 22 && (
                      <Fragment>
                        <span className="absolute -inset-[2px] border-3 border-black" />
                        <span className="absolute -bottom-[3px] -right-[3px] h-[6px] w-[6px] border-l border-t border-white bg-black" />
                      </Fragment>
                    )}
                    {c === "AD" && n === 32 && <span className="pl-[3px]">s</span>}
                  </td>
                ))}
                <td className="border-b border-[#d0d7e5] p-0" />
              </tr>
            );
          })}
        </tbody>
      </table>
    </div>
  );
}

function VerticalScroll() {
  return (
    <div className="flex w-4 shrink-0 flex-col border-l border-[#5b86b8] bg-linear-to-r from-[#6b8dbd] to-[#8daede]">
      <div className="flex h-2 items-center justify-center bg-white"><span className="h-px w-[9px] bg-[#4d78b0]" /></div>
      <button aria-label="Nach oben" className="flex h-4 items-center justify-center border border-[#55729f] bg-linear-to-r from-[#e9edf3] to-[#b9c6da]">
        <svg className="h-[5px] w-[9px]" viewBox="0 0 9 5"><path d="M4.500 0L9 5H0z" fill="#3c4a70" /></svg>
      </button>
      <div className="flex h-[364px] flex-col items-center justify-center gap-px rounded-[1px] border border-[#3e6db5] bg-linear-to-r from-[#dceafd] via-[#b5d2fa] to-[#c6dcfb]">
        {[0, 1, 2, 3].map((i) => <span key={i} className="h-px w-2 bg-[#6c83a8]" />)}
      </div>
      <button aria-label="Nach unten" className="mt-auto flex h-4 items-center justify-center border border-[#55729f] bg-linear-to-r from-[#e9edf3] to-[#b9c6da]">
        <svg className="h-[5px] w-[9px]" viewBox="0 0 9 5"><path d="M0 0h9L4.500 5z" fill="#3c4a70" /></svg>
      </button>
    </div>
  );
}

function SheetTab({ name, active, className }: { name: string; active?: boolean; className: string }) {
  return (
    <button className={`relative h-[15px] shrink-0 text-[12px] leading-[15px] text-[#15428b] ${active ? "z-10 font-bold" : ""} ${className}`}>
      <svg className="absolute inset-0 h-full w-full" viewBox="0 0 80 15" preserveAspectRatio="none">
        <path d={name === "Tabelle3" ? "M0 15L11 0h69L69 14q-1 1-2 1z" : "M0 15V0h80v10q-1 5-6 5z"} fill={active ? "#fff" : "#d3e3f8"} stroke="#7e9fca" />
      </svg>
      <span className="relative">{name}</span>
    </button>
  );
}

function SheetTabs() {
  const nav: [string, string][] = [
    ["Erstes Blatt", "M1 0h2v8H1zM8 0v8L4 4z"],
    ["Vorheriges Blatt", "M6 0v8L2 4z"],
    ["Nächstes Blatt", "M2 0v8l4-4z"],
    ["Letztes Blatt", "M6 0h2v8H6zM1 0v8l4-4z"],
  ];
  return (
    <div className="flex h-[17px] shrink-0 border-b border-t border-[#6f93c2] bg-[#9db8dd]">
      <div className="flex w-[63px] items-center justify-around bg-linear-to-b from-[#dce9fa] to-[#b8d2f4] pl-[2px]">
        {nav.map(([label, d]) => (
          <button key={label} aria-label={label}><svg className="h-2 w-[9px]" viewBox="0 0 9 8"><path d={d} fill="#1c4a9c" /></svg></button>
        ))}
      </div>
      <div className="flex">
        <SheetTab name="Tabelle1" className="w-[67px]" />
        <SheetTab name="Tabelle2" active className="w-[66px]" />
        <SheetTab name="Tabelle3" className="-ml-1 w-[77px]" />
        <button aria-label="Tabellenblatt einfügen" className="relative -ml-[11px] h-[15px] w-[44px]">
          <svg viewBox="0 0 44 15">
            <path d="M0 15L11 0h33L32 15z" fill="#d3e3f8" stroke="#7e9fca" />
            <path d="M15.500 4.500h10v6q-1 3-4 2h-6z" fill="#e6eefb" stroke="#6c7fae" />
            <path d="M14 1v7M10.500 4.500h7M11.500 2l5 5M16.500 2l-5 5" stroke="#ef9a1d" />
          </svg>
        </button>
      </div>
      <div className="ml-auto flex w-[649px] items-stretch bg-[#7d9cca]">
        <span className="w-[7px] border border-[#6f93c2] bg-white" />
        <button aria-label="Nach links" className="flex w-[18px] items-center justify-center">
          <svg className="h-[9px] w-[5px]" viewBox="0 0 5 9"><path d="M5 0v9L0 4.500z" fill="#344a78" /></svg>
        </button>
        <div className="flex w-[550px] items-center justify-center gap-px rounded-[2px] border border-[#55729f] bg-linear-to-b from-[#eef2f6] via-[#d6e0eb] via-55% to-[#b0c2da]">
          {[0, 1, 2, 3].map((i) => <span key={i} className="h-[7px] w-px bg-[#6f7f95]" />)}
        </div>
        <button aria-label="Nach rechts" className="ml-auto mr-1 flex w-[10px] items-center justify-center">
          <svg className="h-[9px] w-[5px]" viewBox="0 0 5 9"><path d="M0 0v9l5-4.500z" fill="#344a78" /></svg>
        </button>
        <span className="w-[7px] border border-[#6f93c2] bg-white" />
        <span className="w-4 bg-[#84a6dc]" />
      </div>
    </div>
  );
}

function StatusBar() {
  const round = "flex h-[15px] w-[15px] items-center justify-center rounded-full border border-[#5c79a8] bg-linear-to-b from-white to-[#c5d6ee]";
  return (
    <footer className="flex h-[21px] shrink-0 items-stretch border-t border-white bg-linear-to-b from-[#d5e5fb] via-[#b1cff5] via-35% to-[#d8e7fb] text-[#15428b]">
      <p className="flex w-1/2 items-center border-r border-[#9dbde8] pb-px pl-[7px] text-[#1c2f6b]">Markieren Sie den Zielbereich, und drücken Sie die Eingabetaste.</p>
      <div className="ml-auto flex w-[249px] items-center border-l-2 border-[#7fa3d6] bg-linear-to-b from-[#b9d0f0] via-[#86aadf] via-35% to-[#a5c3ee] pl-1">
        <div className="flex h-[18px] w-[57px] overflow-hidden rounded-[2px] border border-[#7092c4] bg-[#c3d7f2]">
          <button aria-label="Normal" className="flex flex-1 items-center justify-center bg-linear-to-b from-[#fcd9a0] to-[#f9b953]">
            <svg className="h-[10px] w-[13px]" viewBox="0 0 13 10" fill="#fff" stroke="#555"><path d="M.5 .5h12v9H.5zM.5 3.500h12M.5 6.500h12M4.500 0v10M8.500 0v10" /></svg>
          </button>
          <button aria-label="Seitenlayout" className="flex flex-1 items-center justify-center">
            <svg className="h-[11px] w-[13px]" viewBox="0 0 13 11" fill="#c9ccd2" stroke="#555"><path d="M.5 .5h12v10H.5z" /><path d="M3.500 2.500h6v7h-6zM5 4.500h3M5 6.500h3" fill="#fff" /></svg>
          </button>
          <button aria-label="Umbruchvorschau" className="flex flex-1 items-center justify-center">
            <svg className="h-[11px] w-[13px]" viewBox="0 0 13 11" fill="#c9ccd2" stroke="#555"><path d="M.5 .5h12v10H.5z" /><path d="M1.500 .5h4v6h-4zM7.500 .5h4v6h-4z" fill="#fff" /></svg>
          </button>
        </div>
        <button className="ml-[9px] w-[31px] whitespace-nowrap text-left text-[#1c2f6b]">100 %</button>
        <button aria-label="Verkleinern" className={`${round} ml-[7px]`}><span className="h-[2px] w-2 bg-[#44546c]" /></button>
        <input
          type="range"
          aria-label="Zoom"
          defaultValue={49}
          className="mx-px h-4 w-[102px] appearance-none bg-[linear-gradient(#5f83b9,#5f83b9)] bg-[length:100%_1px] bg-center bg-no-repeat [&::-webkit-slider-thumb]:h-[13px] [&::-webkit-slider-thumb]:w-[9px] [&::-webkit-slider-thumb]:appearance-none [&::-webkit-slider-thumb]:rounded-b-full [&::-webkit-slider-thumb]:border [&::-webkit-slider-thumb]:border-[#4d6b9b] [&::-webkit-slider-thumb]:bg-[#e4edf9]"
        />
        <button aria-label="Vergrößern" className={round}>
          <svg className="h-2 w-2" viewBox="0 0 8 8" stroke="#44546c" strokeWidth="2"><path d="M0 4h8M4 0v8" /></svg>
        </button>
      </div>
    </footer>
  );
}

function Taskbar() {
  return (
    <div className="flex h-10 shrink-0 items-stretch bg-[linear-gradient(90deg,#1d1f23_0%,#222326_42%,#3a3a3a_47%,#3c4346_56%,#3d3f3c_62%,#3d322f_70%,#3e3634_78%,#3b3b3b_82%)] text-white">
      <button aria-label="Start" className="flex w-12 items-center justify-center">
        <svg className="h-4 w-4" viewBox="0 0 16 16" fill="#fff"><path d="M0 2.200L6.500 1.300V7.500H0zM7.300 1.200L16 0v7.500H7.300zM0 8.300h6.500v6.300L0 13.700zM7.300 8.300H16V16l-8.700-1.200z" /></svg>
      </button>
      <label className="flex w-[344px] items-center border border-[#c9c9c9] bg-[#f2f2f2]">
        <svg className="ml-[11px] h-[17px] w-[17px]" viewBox="0 0 17 17" fill="none" stroke="#222" strokeWidth="1.300"><circle cx="10.500" cy="6" r="5" /><path d="M7 9.500L.5 16" /></svg>
        <input aria-label="Suche" placeholder="Zur Suche Text hier eingeben" className="ml-[11px] min-w-0 flex-1 pt-px text-[14px] outline-none placeholder:text-[#444]" />
      </label>
      <button aria-label="Cortana" className="flex w-12 items-center justify-center"><span className="h-[15px] w-[15px] rounded-full border-2 border-white" /></button>
      <button aria-label="Taskansicht" className="flex w-12 items-center justify-center">
        <svg className="h-4 w-4" viewBox="0 0 16 16" fill="none" stroke="#fff"><path d="M.5 0v2.500h10V0M.5 16v-2.500h10V16M.5 4.500h10v7H.5zM14.500 0v3M14.500 8v8" /><path d="M13 4h3v3h-3z" fill="#fff" stroke="none" /></svg>
      </button>
      <div className="flex w-[27px] items-center gap-[2px] pl-[6px]"><span className="h-4 w-px bg-[#555]" /><span className="h-4 w-px bg-[#555]" /></div>
      <button aria-label="Opera" className="mr-1 flex w-10 items-center justify-center border-b-2 border-[#76b9ed] pt-[2px]">
        <svg className="h-[22px] w-[23px]" viewBox="0 0 23 22">
          <defs><linearGradient id="opera"><stop offset="0" stopColor="#ff1b2d" /><stop offset=".5" stopColor="#c8101c" /><stop offset="1" stopColor="#ff5a5a" /></linearGradient></defs>
          <path fillRule="evenodd" d="M11.500 0a11.500 11 0 100 22 11.500 11 0 000-22zM11.500 3q5 1 5 8t-5 8q-5-1-5-8t5-8z" fill="url(#opera)" />
        </svg>
      </button>
      <button aria-label="Excel" className="flex w-12 items-center justify-center border-b-2 border-[#76b9ed] bg-[#4b4d51] pt-[2px]">
        <svg className="h-[22px] w-[23px]" viewBox="0 0 23 22">
          <path d="M1 3q0-2 2-2l17-.5V18L1 21z" fill="#6cb445" />
          <path d="M2.500 5L20 2v15L2.500 19z" fill="#eaf5e2" />
          <path d="M11 6.500h11.500v14l-19-1V6.500z" fill="#f4faef" stroke="#a9d08c" strokeWidth=".7" />
          <path d="M15 7h6v3.500h-6zM15 12h6v3h-6zM15 16.500h6v3h-6zM9.500 16.500H14v3H9.500zM4.500 16.500H8v2.500H4.500z" fill="#79bd56" />
          <path d="M5 5.500h3l2 3 2-3h2.500L11.500 10l3 5h-3l-2-3-2 3H5L8 10z" fill="#256b20" />
        </svg>
      </button>
      <div className="ml-auto flex items-center">
        <button aria-label="Hilfe" className="mr-[18px]">
          <svg className="h-6 w-6" viewBox="0 0 24 24">
            <circle cx="11" cy="11" r="10" fill="#1090d8" stroke="#fff" strokeWidth="1.500" />
            <text x="11" y="17" textAnchor="middle" fontSize="17" fontWeight="700" fontFamily="Open Sans" fill="#fff">?</text>
            <circle cx="19" cy="16" r="4.500" fill="#f3a71b" /><path d="M19 15v4M19 13v1" stroke="#fff" strokeWidth="1.300" />
          </svg>
        </button>
        <button aria-label="Kontakte" className="mr-[22px]">
          <svg className="h-4 w-4" viewBox="0 0 16 16" fill="none" stroke="#fff" strokeWidth="1.200"><circle cx="5" cy="7" r="2.500" /><path d="M.6 15q0-5 4.400-5t4.400 5" /><circle cx="11" cy="3" r="2.500" /><path d="M9 7q5-3 6 4" /></svg>
        </button>
        <button aria-label="Ausgeblendete Symbole" className="mr-[14px]"><svg className="h-[7px] w-3" viewBox="0 0 12 7" fill="none" stroke="#fff" strokeWidth="1.200"><path d="M.5 6.500L6 1l5.500 5.500" /></svg></button>
        <button aria-label="Kamera" className="mr-3">
          <svg className="h-4 w-3" viewBox="0 0 12 16" fill="none" stroke="#fff" strokeWidth="1.200"><path d="M.6 4.600h7v7h-7zM8 8l3-2v5L8 9M2 2q4-3 8 0M2 14q4 3 8 0" /></svg>
        </button>
        <button aria-label="WLAN" className="mr-2">
          <svg className="h-[13px] w-[13px]" viewBox="0 0 13 13" fill="none" strokeWidth="1.200"><path d="M.6 13Q1 1 13 .6M3.600 13Q4 4 13 3.600" stroke="#888" /><path d="M6.600 13Q7 7 13 6.600M9.600 13q0-3 3.400-3.400" stroke="#fff" /></svg>
        </button>
        <button aria-label="Lautstärke" className="mr-2">
          <svg className="h-[14px] w-4" viewBox="0 0 16 14" fill="none" stroke="#fff" strokeWidth="1.200"><path d="M.6 4.600H3l4-3.500v12L3 9.500H.6zM9 5q1.500 2 0 4M11 3q3 4 0 8" /><path d="M13 1q4.500 6 0 12" stroke="#999" /></svg>
        </button>
        <button aria-label="Akku" className="mr-2">
          <svg className="h-[11px] w-4" viewBox="0 0 16 11" fill="none" stroke="#fff"><path d="M4 3.500h10.500v6H3.500V7M15.500 5v3M1 .5v2M4 .5v2M.5 2.500h4v2q-2 2-4 0zM2.500 5v3" /><path d="M6 5h7v3H6z" fill="#fff" /></svg>
        </button>
        <time className="w-[58px] text-center text-[11px] leading-[18px]">18:22<br />20.12.2020</time>
        <button aria-label="Benachrichtigungen" className="ml-4 mr-[20px]">
          <svg className="h-4 w-4" viewBox="0 0 16 16" fill="none" stroke="#fff"><path d="M9 12.500H5L3 15v-2.500H.5V.5h15V8" /><path d="M15 9q-1 4-5 4 1 3 4 2t2-4z" fill="#fff" /></svg>
        </button>
        <span className="mr-1 h-10 w-px bg-[#6b6b6b]" />
      </div>
    </div>
  );
}

export default function App() {
  return (
    <div className={`flex h-screen flex-col overflow-hidden bg-[#bfdbff] text-[11px] leading-4 ${UI}`}>
      <TitleBar />
      <RibbonTabs />
      <Ribbon />
      <FormulaBar />
      <div className="h-1 shrink-0 border-b border-[#6f93c2] bg-[#e3edf9]" />
      <div className="flex min-h-0 flex-1">
        <Sheet />
        <VerticalScroll />
      </div>
      <SheetTabs />
      <StatusBar />
      <Taskbar />
    </div>
  );
}
